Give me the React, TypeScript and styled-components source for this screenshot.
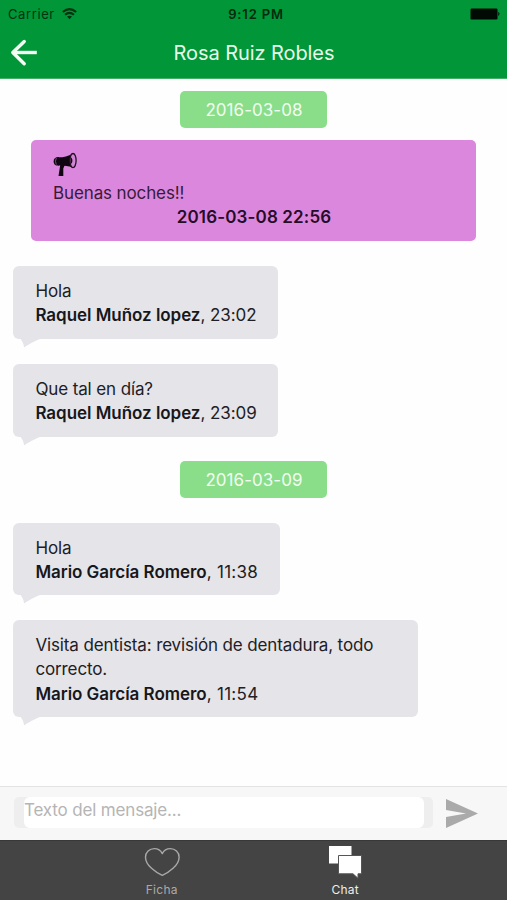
import React from "react";
import styled, { createGlobalStyle } from "styled-components";

const GlobalStyle = createGlobalStyle`
  * { box-sizing: border-box; }
  body { margin: 0; background: #fff; font-family: Inter, "Liberation Sans", sans-serif; }
`;

const Screen = styled.div`
  display: flex;
  flex-direction: column;
  width: 507px;
  height: 900px;
  overflow: hidden;
  background: #fefefe;
  color: #202024;
`;

const Header = styled.header`
  height: 79px;
  flex: none;
  background: #019638;
  border-bottom: 1px solid #43ae68;
`;

const StatusBar = styled.div`
  display: grid;
  grid-template-columns: 1fr auto 1fr;
  align-items: center;
  height: 27px;
  padding: 0 6px 0 8px;
  font-size: 13px;
  color: #03330f;
`;

const Carrier = styled.div`
  display: flex;
  align-items: center;
  gap: 7px;
  letter-spacing: 0.6px;
`;

const Clock = styled.div`
  margin-left: 3px;
  font-weight: 600;
  letter-spacing: 0.85px;
  color: #022b0c;
`;

const BatteryIcon = styled.svg`
  justify-self: end;
`;

const NavBar = styled.div`
  display: grid;
  grid-template-columns: 48px 1fr 48px;
  align-items: center;
  height: 51px;
`;

const BackButton = styled.button`
  justify-self: start;
  border: 0;
  padding: 0 0 0 10px;
  background: none;
  line-height: 0;
`;

const Title = styled.h1`
  margin: 0 0 0 1px;
  text-align: center;
  font-size: 20px;
  font-weight: 400;
  line-height: 24px;
  letter-spacing: -0.08px;
  color: #e6f9e8;
`;

const Messages = styled.main`
  display: flex;
  flex-direction: column;
  align-items: flex-start;
  flex: 1;
  padding: 12px 13px 0;
  font-size: 17px;
  line-height: 24.4px;
  letter-spacing: -0.12px;
`;

const DatePill = styled.div`
  align-self: center;
  width: 147px;
  height: 37px;
  margin-bottom: 12px;
  border-radius: 5px;
  background: #8ade8a;
  color: #f0fdf0;
  text-align: center;
  text-indent: 1px;
  line-height: 38px;
  letter-spacing: 0.05px;
`;

const Notice = styled.section`
  align-self: center;
  width: 445px;
  height: 101px;
  margin-bottom: 25px;
  padding: 12px 22px;
  border-radius: 5px;
  background: #dc87de;
  color: #351b38;
`;

const NoticeIcon = styled.svg`
  display: block;
  height: 25px;
  margin-bottom: 4px;
`;

const NoticeTime = styled.div`
  text-align: center;
  text-indent: 1px;
  font-weight: 600;
  letter-spacing: 0.14px;
  color: #250d27;
`;

const Bubble = styled.article<{ $width: number; $gap: number }>`
  position: relative;
  width: ${(p) => p.$width}px;
  margin-bottom: ${(p) => p.$gap}px;
  padding: 13px 22px 11px 22.4px;
  border-radius: 6px;
  background: #e5e4e9;
  white-space: nowrap;
`;

const Tail = styled.svg`
  position: absolute;
  left: 7px;
  top: calc(100% - 1px);
`;

const Author = styled.strong`
  font-weight: 600;
  letter-spacing: -0.04px;
  color: #17171a;
`;

const Time = styled.span<{ $spacing: number }>`
  letter-spacing: ${(p) => p.$spacing}px;
`;

const DayStart = styled.div`
  padding-top: 12.4px;
`;

const Composer = styled.form`
  display: flex;
  align-items: center;
  flex: none;
  height: 54px;
  padding: 0 29px 0 14px;
  border-top: 1px solid #e3e3e3;
  background: #f7f7f7;
`;

const InputShell = styled.div`
  width: 419px;
  height: 31px;
  margin-bottom: 2px;
  padding: 0 9px 0 10px;
  border-radius: 5px;
  background: #eee;
`;

const MessageInput = styled.input`
  display: block;
  width: 100%;
  height: 31px;
  padding: 0 0 5px;
  border: 0;
  border-radius: 6px;
  outline: 0;
  background: #fff;
  font: 400 17px Inter, "Liberation Sans", sans-serif;
  letter-spacing: -0.16px;
  &::placeholder { color: #b5b5b5; opacity: 1; }
`;

const SendButton = styled.button`
  margin-left: 13px;
  padding: 0;
  border: 0;
  background: none;
  line-height: 0;
`;

const TabBar = styled.nav`
  display: flex;
  justify-content: center;
  flex: none;
  height: 60px;
  border-top: 1px solid #383838;
  background: #444;
`;

const Tab = styled.a<{ $active?: boolean }>`
  display: flex;
  flex-direction: column;
  align-items: center;
  width: 183.5px;
  padding-top: 5px;
  font-size: 12px;
  line-height: 15px;
  letter-spacing: 0.3px;
  color: ${(p) => (p.$active ? "#ededed" : "#aaa")};
  svg { height: 36px; flex: none; overflow: visible; }
`;

type MessageProps = {
  text: React.ReactNode;
  author: string;
  time: string;
  width: number;
  gap?: number;
  timeSpacing?: number;
};

function Message({ text, author, time, width, gap = 24.6, timeSpacing = -0.08 }: MessageProps) {
  return (
    <Bubble $width={width} $gap={gap}>
      <div>{text}</div>
      <div><Author>{author}</Author><Time $spacing={timeSpacing}>, {time}</Time></div>
      <Tail width="24" height="10" viewBox="0 0 24 10">
        <path d="M0 0H24C18 1 11 5 4 9.5C4 6 2 3 0 0Z" fill="#e5e4e9" />
      </Tail>
    </Bubble>
  );
}

export default function App() {
  return (
    <Screen>
      <GlobalStyle />
      <Header>
        <StatusBar>
          <Carrier>
            Carrier
            <svg width="15" height="12" viewBox="0 0 15 12" fill="none" stroke="#03330f" strokeWidth="2">
              <path d="M.8 4.1Q7.5-1.8 14.2 4.1M3.1 6.8Q7.5 3 11.9 6.8" />
              <path d="M5 8.6Q7.5 6.8 10 8.6L7.5 11.2Z" fill="#03330f" stroke="none" />
            </svg>
          </Carrier>
          <Clock>9:12 PM</Clock>
          <BatteryIcon width="31" height="12" viewBox="0 0 31 12">
            <rect x=".5" y=".5" width="27" height="11" rx="1.2" fill="#010b04" />
            <path d="M28.3 3.8Q30.6 5.8 28.3 8.2Z" fill="#010b04" />
          </BatteryIcon>
        </StatusBar>
        <NavBar>
          <BackButton aria-label="Atrás">
            <svg width="28" height="28" viewBox="0 0 28 28" fill="none" stroke="#f4fff4" strokeWidth="3.4" strokeLinecap="round" strokeLinejoin="round">
              <path d="M14.2 2.5L2.8 13.5L14.2 24.7" />
              <path d="M3.5 13.5H26.8" strokeLinecap="butt" />
            </svg>
          </BackButton>
          <Title>Rosa Ruiz Robles</Title>
        </NavBar>
      </Header>

      <Messages>
        <DatePill>2016-03-08</DatePill>
        <Notice>
          <NoticeIcon width="25" height="25" viewBox="0 0 25 25">
            <path d="M5 5.3C11 5.3 15 4 20 1.4V15.8C15 14 12 13.6 5 13.6Z" fill="#100611" />
            <path d="M6 5C2.5 4.8 .6 6.5 .6 9.4S2.5 13.8 6 13.6Z" fill="#100611" />
            <path d="M3.3 6Q1.6 9.3 3.3 12.6" fill="none" stroke="#a869aa" strokeWidth=".7" />
            <path d="M7.3 12.5H12L10.3 16.5V24H5.5Z" fill="#100611" />
            <ellipse cx="20" cy="8.6" rx="3.1" ry="7.1" fill="#d185d3" stroke="#241126" strokeWidth="1.3" />
            <path d="M17.6 5.2C20 6.2 20 11 17.6 12Z" fill="#100611" />
          </NoticeIcon>
          <div>Buenas noches!!</div>
          <NoticeTime>2016-03-08 22:56</NoticeTime>
        </Notice>
        <Message text="Hola" author="Raquel Muñoz lopez" time="23:02" width={265} gap={25} />
        <Message text="Que tal en día?" author="Raquel Muñoz lopez" time="23:09" width={265} />
        <DatePill>2016-03-09</DatePill>
        <DayStart>
          <Message text="Hola" author="Mario García Romero" time="11:38" width={267} timeSpacing={0.3} />
        </DayStart>
        <Message
          text={<>Visita dentista: revisión de dentadura, todo<br />correcto.</>}
          author="Mario García Romero"
          time="11:54"
          width={405}
          timeSpacing={0.3}
        />
      </Messages>

      <Composer>
        <InputShell><MessageInput placeholder="Texto del mensaje..." /></InputShell>
        <SendButton type="button" aria-label="Enviar">
          <svg width="32" height="30" viewBox="0 0 32 30">
            <path d="M0 0L32 14.5L0 29V18L20 14.5L0 11Z" fill="#aaa" />
          </svg>
        </SendButton>
      </Composer>
      <TabBar>
        <Tab>
          <svg width="36" height="36" viewBox="0 0 36 36" fill="none" stroke="#a9a9a9" strokeWidth="1.4" strokeLinejoin="round">
            <path d="M18.3 29.4C12 26.5 1.5 19.5 1.5 11.2C1.5 6 5.5 2.6 10.3 2.6C14 2.6 16.8 4.5 18.3 7.6C19.8 4.5 22.6 2.6 26.3 2.6C31.1 2.6 35.1 6 35.1 11.2C35.1 19.5 24.6 26.5 18.3 29.4Z" />
          </svg>
          Ficha
        </Tab>
        <Tab $active>
          <svg width="34" height="36" viewBox="0 0 34 36" fill="#fff">
            <path d="M1 0H23.5V17.5H1Z" />
            <path d="M10.5 9.5H33.5V27.8H30V32.3L25 27.8H10.5Z" stroke="#555" strokeWidth="1" />
          </svg>
          Chat
        </Tab>
      </TabBar>
    </Screen>
  );
}
